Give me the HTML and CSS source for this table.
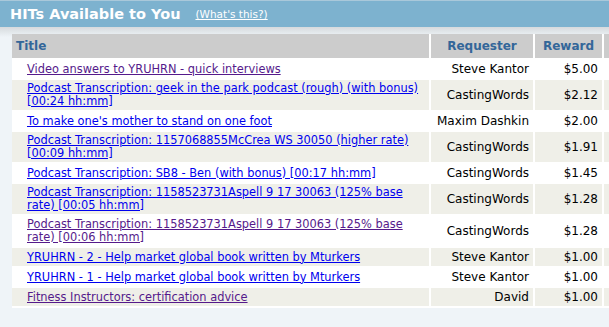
FILE: index.html
```html
<!DOCTYPE html>
<html lang="en">
<head>
    <meta charset="UTF-8">
    <title>HITs Available to You</title>
    <link rel="stylesheet" href="styles.css">
</head>
<body>

    <!-- Section Header -->
    <div class="section-bar">
        <h1>HITs Available to You</h1>
        <a href="#" class="whats-this">(What's this?)</a>
    </div>

    <!-- HIT List -->
    <div class="hit-wrap">
        <table class="hit-table">
            <thead>
                <tr>
                    <th class="col-title">Title</th>
                    <th class="col-requester">Requester</th>
                    <th class="col-reward">Reward</th>
                    <th class="col-more"></th>
                </tr>
            </thead>
            <tbody>
                <tr>
                    <td><a href="#" class="visited">Video answers to YRUHRN - quick interviews</a></td>
                    <td class="requester">Steve Kantor</td>
                    <td class="reward">$5.00</td>
                    <td></td>
                </tr>
                <tr class="alt">
                    <td><a href="#">Podcast Transcription: geek in the park podcast (rough) (with bonus) [00:24 hh:mm]</a></td>
                    <td class="requester">CastingWords</td>
                    <td class="reward">$2.12</td>
                    <td></td>
                </tr>
                <tr>
                    <td><a href="#">To make one's mother to stand on one foot</a></td>
                    <td class="requester">Maxim Dashkin</td>
                    <td class="reward">$2.00</td>
                    <td></td>
                </tr>
                <tr class="alt">
                    <td><a href="#">Podcast Transcription: 1157068855McCrea WS 30050 (higher rate) [00:09 hh:mm]</a></td>
                    <td class="requester">CastingWords</td>
                    <td class="reward">$1.91</td>
                    <td></td>
                </tr>
                <tr>
                    <td><a href="#">Podcast Transcription: SB8 - Ben (with bonus) [00:17 hh:mm]</a></td>
                    <td class="requester">CastingWords</td>
                    <td class="reward">$1.45</td>
                    <td></td>
                </tr>
                <tr class="alt">
                    <td><a href="#">Podcast Transcription: 1158523731Aspell 9 17 30063 (125% base rate) [00:05 hh:mm]</a></td>
                    <td class="requester">CastingWords</td>
                    <td class="reward">$1.28</td>
                    <td></td>
                </tr>
                <tr>
                    <td><a href="#" class="visited">Podcast Transcription: 1158523731Aspell 9 17 30063 (125% base rate) [00:06 hh:mm]</a></td>
                    <td class="requester">CastingWords</td>
                    <td class="reward">$1.28</td>
                    <td></td>
                </tr>
                <tr class="alt">
                    <td><a href="#">YRUHRN - 2 - Help market global book written by Mturkers</a></td>
                    <td class="requester">Steve Kantor</td>
                    <td class="reward">$1.00</td>
                    <td></td>
                </tr>
                <tr>
                    <td><a href="#">YRUHRN - 1 - Help market global book written by Mturkers</a></td>
                    <td class="requester">Steve Kantor</td>
                    <td class="reward">$1.00</td>
                    <td></td>
                </tr>
                <tr class="alt">
                    <td><a href="#" class="visited">Fitness Instructors: certification advice</a></td>
                    <td class="requester">David</td>
                    <td class="reward">$1.00</td>
                    <td></td>
                </tr>
            </tbody>
        </table>
    </div>

</body>
</html>
```

FILE: styles.css
```css
/* General Styles */
* {
    margin: 0;
    padding: 0;
    box-sizing: border-box;
}

body {
    font-family: 'DejaVu Sans', Verdana, sans-serif;
    font-size: 11px;
    background-color: #eff4f8;
    color: #000;
    width: 609px;
    overflow: hidden;
}

/* Section Header */
.section-bar {
    background-color: #7db2cf;
    border-top: 1px solid #a9c8da;
    height: 27px;
    display: flex;
    align-items: center;
    padding-left: 10px;
    gap: 15px;
}

.section-bar h1 {
    font-size: 14.5px;
    font-weight: bold;
    color: white;
}

.whats-this {
    color: white;
    font-size: 10.5px;
}

/* HIT Table */
.hit-wrap {
    padding: 7px 0 0 12px;
    background: linear-gradient(#d6dadd, #eff4f8 10px);
}

.hit-table {
    width: 620px;
    border-collapse: separate;
    border-spacing: 0;
}

.hit-table th {
    background-color: #cccccc;
    color: #336699;
    font-size: 12px;
    font-weight: bold;
    height: 26px;
    border-right: 2px solid #fff;
    border-bottom: 2px solid #fff;
}

.hit-table th.col-title {
    text-align: left;
    padding-left: 4px;
    width: 419px;
}

.hit-table th.col-requester {
    width: 104px;
    text-align: center;
}

.hit-table th.col-reward {
    width: 69px;
    text-align: center;
}

.hit-table td {
    background-color: #fff;
    font-size: 11.4px;
    line-height: 13px;
    padding: 2px 4px 2px 15px;
    height: 20px;
    border-right: 2px solid #fff;
    border-bottom: 2px solid #fff;
    vertical-align: middle;
}

.hit-table tr.alt td {
    background-color: #efefe8;
}

.hit-table td.requester,
.hit-table td.reward {
    text-align: right;
    padding-left: 4px;
    font-size: 12px;
}

.hit-table a {
    color: #0000ee;
}

.hit-table a.visited {
    color: #551a8b;
}
```
